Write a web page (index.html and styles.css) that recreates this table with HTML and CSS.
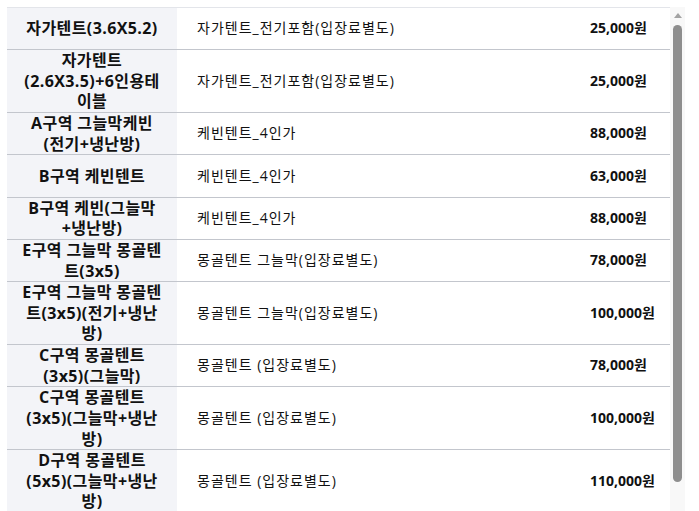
FILE: index.html
```html
<!DOCTYPE html>
<html lang="ko">
<head>
<meta charset="utf-8">
<title>텐트 요금표</title>
<link rel="stylesheet" href="styles.css">
</head>
<body>
<div class="wrap">
  <div class="list">
    <table class="price-table">
      <tbody>
        <tr><th>자가텐트(3.6X5.2)</th><td class="desc">자가텐트_전기포함(입장료별도)</td><td class="price">25,000원</td></tr>
        <tr><th>자가텐트<br>(2.6X3.5)+6인용테<br>이블</th><td class="desc">자가텐트_전기포함(입장료별도)</td><td class="price">25,000원</td></tr>
        <tr><th>A구역 그늘막케빈<br>(전기+냉난방)</th><td class="desc">케빈텐트_4인가</td><td class="price">88,000원</td></tr>
        <tr><th>B구역 케빈텐트</th><td class="desc">케빈텐트_4인가</td><td class="price">63,000원</td></tr>
        <tr><th>B구역 케빈(그늘막<br>+냉난방)</th><td class="desc">케빈텐트_4인가</td><td class="price">88,000원</td></tr>
        <tr><th>E구역 그늘막 몽골텐<br>트(3x5)</th><td class="desc">몽골텐트 그늘막(입장료별도)</td><td class="price">78,000원</td></tr>
        <tr><th>E구역 그늘막 몽골텐<br>트(3x5)(전기+냉난<br>방)</th><td class="desc">몽골텐트 그늘막(입장료별도)</td><td class="price">100,000원</td></tr>
        <tr><th>C구역 몽골텐트<br>(3x5)(그늘막)</th><td class="desc">몽골텐트 (입장료별도)</td><td class="price">78,000원</td></tr>
        <tr><th>C구역 몽골텐트<br>(3x5)(그늘막+냉난<br>방)</th><td class="desc">몽골텐트 (입장료별도)</td><td class="price">100,000원</td></tr>
        <tr><th>D구역 몽골텐트<br>(5x5)(그늘막+냉난<br>방)</th><td class="desc">몽골텐트 (입장료별도)</td><td class="price">110,000원</td></tr>
      </tbody>
    </table>
  </div>
  <div class="scrollbar">
    <div class="arrow"></div>
    <div class="thumb"></div>
  </div>
</div>
</body>
</html>
```

FILE: styles.css
```css
html, body {
  margin: 0;
  padding: 0;
  background: #ffffff;
  overflow: hidden;
}
body {
  font-family: "Open Sans", "Noto Sans CJK KR", sans-serif;
  color: #111111;
}
.wrap {
  display: flex;
  padding: 7px 0 0 7px;
  height: 504px;
}
.list {
  width: 663px;
  overflow: hidden;
}
.price-table {
  width: 663px;
  border-collapse: collapse;
  border-top: 1px solid #e3e5ea;
  table-layout: fixed;
}
.price-table tr {
  border-bottom: 1px solid #c3c6cd;
}
.price-table th,
.price-table td {
  height: 41.3px;
  padding: 0;
  line-height: 20.6px;
  vertical-align: middle;
  white-space: nowrap;
}
.price-table th {
  width: 170px;
  padding: 0;
  background: #f3f4f8;
  font-size: 16px;
  font-weight: 700;
  letter-spacing: 0.4px;
  text-align: center;
}
.price-table td.desc {
  width: 373px;
  padding-left: 20px;
  font-size: 14px;
  font-weight: 400;
  letter-spacing: 1px;
  text-align: left;
}
.price-table td.price {
  width: 80px;
  padding-left: 20px;
  font-size: 14px;
  font-weight: 700;
  text-align: left;
}
.scrollbar {
  width: 15px;
  background: #f8f8f8;
  display: flex;
  flex-direction: column;
  align-items: center;
}
.arrow {
  margin-top: 6px;
  width: 0;
  height: 0;
  border-left: 4px solid transparent;
  border-right: 4px solid transparent;
  border-bottom: 5px solid #a3a3a3;
}
.thumb {
  margin-top: 7px;
  width: 9px;
  height: 457px;
  border-radius: 5px;
  background: #8e8e8e;
}
```
